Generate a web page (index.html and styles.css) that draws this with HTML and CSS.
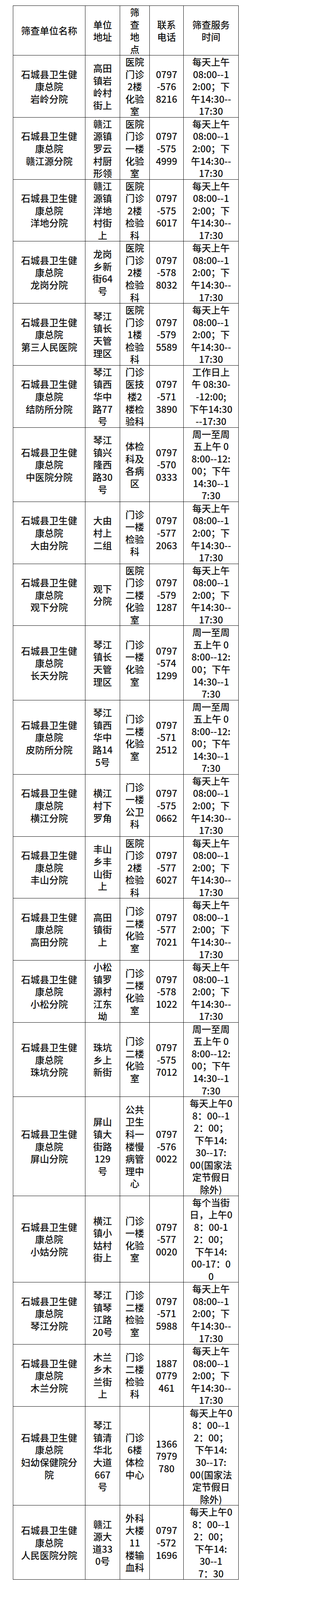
FILE: index.html
```html
<!DOCTYPE html>
<html lang="zh-CN">
<head>
<meta charset="utf-8">
<title>筛查单位</title>
<link rel="stylesheet" href="styles.css">
</head>
<body>
<div class="page">
<table class="screening">
<colgroup>
<col class="c-name"><col class="c-addr"><col class="c-place"><col class="c-tel"><col class="c-time">
</colgroup>
<thead>
<tr><th>筛查单位名称</th><th>单位<br>地址</th><th>筛<br>查<br>地<br>点</th><th>联系<br>电话</th><th>筛查服务<br>时间</th></tr>
</thead>
<tbody>
<tr><td>石城县卫生健<br>康总院<br>岩岭分院</td><td>高田<br>镇岩<br>岭村<br>街上</td><td>医院<br>门诊<br>2楼<br>化验<br>室</td><td>0797<br>-576<br>8216</td><td>每天上午<br>08:00--1<br>2:00；下<br>午14:30--<br>17:30</td></tr>
<tr><td>石城县卫生健<br>康总院<br>赣江源分院</td><td>赣江<br>源镇<br>罗云<br>村厨<br>形领</td><td>医院<br>门诊<br>一楼<br>化验<br>室</td><td>0797<br>-575<br>4999</td><td>每天上午<br>08:00--1<br>2:00；下<br>午14:30--<br>17:30</td></tr>
<tr><td>石城县卫生健<br>康总院<br>洋地分院</td><td>赣江<br>源镇<br>洋地<br>村街<br>上</td><td>医院<br>门诊<br>2楼<br>检验<br>科</td><td>0797<br>-575<br>6017</td><td>每天上午<br>08:00--1<br>2:00；下<br>午14:30--<br>17:30</td></tr>
<tr><td>石城县卫生健<br>康总院<br>龙岗分院</td><td>龙岗<br>乡新<br>街64<br>号</td><td>医院<br>门诊<br>2楼<br>检验<br>科</td><td>0797<br>-578<br>8032</td><td>每天上午<br>08:00--1<br>2:00；下<br>午14:30--<br>17:30</td></tr>
<tr><td>石城县卫生健<br>康总院<br>第三人民医院</td><td>琴江<br>镇长<br>天管<br>理区</td><td>医院<br>门诊<br>1楼<br>检验<br>科</td><td>0797<br>-579<br>5589</td><td>每天上午<br>08:00--1<br>2:00；下<br>午14:30--<br>17:30</td></tr>
<tr><td>石城县卫生健<br>康总院<br>结防所分院</td><td>琴江<br>镇西<br>华中<br>路77<br>号</td><td>门诊<br>医技<br>楼2<br>楼检<br>验科</td><td>0797<br>-571<br>3890</td><td>工作日上<br>午 08:30-<br>-12:00;<br>下午14:30<br>--17:30</td></tr>
<tr><td>石城县卫生健<br>康总院<br>中医院分院</td><td>琴江<br>镇兴<br>隆西<br>路30<br>号</td><td>体检<br>科及<br>各病<br>区</td><td>0797<br>-570<br>0333</td><td>周一至周<br>五上午 0<br>8:00--12:<br>00；下午<br>14:30--1<br>7:30</td></tr>
<tr><td>石城县卫生健<br>康总院<br>大由分院</td><td>大由<br>村上<br>二组</td><td>门诊<br>一楼<br>检验<br>科</td><td>0797<br>-577<br>2063</td><td>每天上午<br>08:00--1<br>2:00；下<br>午14:30--<br>17:30</td></tr>
<tr><td>石城县卫生健<br>康总院<br>观下分院</td><td>观下<br>分院</td><td>医院<br>门诊<br>二楼<br>化验<br>室</td><td>0797<br>-579<br>1287</td><td>每天上午<br>08:00--1<br>2:00；下<br>午14:30--<br>17:30</td></tr>
<tr><td>石城县卫生健<br>康总院<br>长天分院</td><td>琴江<br>镇长<br>天管<br>理区</td><td>门诊<br>一楼<br>化验<br>室</td><td>0797<br>-574<br>1299</td><td>周一至周<br>五上午 0<br>8:00--12:<br>00；下午<br>14:30--1<br>7:30</td></tr>
<tr><td>石城县卫生健<br>康总院<br>皮防所分院</td><td>琴江<br>镇西<br>华中<br>路14<br>5号</td><td>门诊<br>二楼<br>化验<br>室</td><td>0797<br>-571<br>2512</td><td>周一至周<br>五上午 0<br>8:00--12:<br>00；下午<br>14:30--1<br>7:30</td></tr>
<tr><td>石城县卫生健<br>康总院<br>横江分院</td><td>横江<br>村下<br>罗角</td><td>门诊<br>一楼<br>公卫<br>科</td><td>0797<br>-575<br>0662</td><td>每天上午<br>08:00--1<br>2:00；下<br>午14:30--<br>17:30</td></tr>
<tr><td>石城县卫生健<br>康总院<br>丰山分院</td><td>丰山<br>乡丰<br>山街<br>上</td><td>医院<br>门诊<br>2楼<br>检验<br>科</td><td>0797<br>-577<br>6027</td><td>每天上午<br>08:00--1<br>2:00；下<br>午14:30--<br>17:30</td></tr>
<tr><td>石城县卫生健<br>康总院<br>高田分院</td><td>高田<br>镇街<br>上</td><td>门诊<br>二楼<br>化验<br>室</td><td>0797<br>-577<br>7021</td><td>每天上午<br>08:00--1<br>2:00；下<br>午14:30--<br>17:30</td></tr>
<tr><td>石城县卫生健<br>康总院<br>小松分院</td><td>小松<br>镇罗<br>源村<br>江东<br>坳</td><td>门诊<br>二楼<br>化验<br>室</td><td>0797<br>-578<br>1022</td><td>每天上午<br>08:00--1<br>2:00；下<br>午14:30--<br>17:30</td></tr>
<tr><td>石城县卫生健<br>康总院<br>珠坑分院</td><td>珠坑<br>乡上<br>新街</td><td>门诊<br>二楼<br>化验<br>室</td><td>0797<br>-575<br>7012</td><td>周一至周<br>五上午 0<br>8:00--12:<br>00；下午<br>14:30--1<br>7:30</td></tr>
<tr><td>石城县卫生健<br>康总院<br>屏山分院</td><td>屏山<br>镇大<br>街路<br>129<br>号</td><td>公共<br>卫生<br>科一<br>楼慢<br>病管<br>理中<br>心</td><td>0797<br>-576<br>0022</td><td>每天上午0<br>8：00--1<br>2：00；<br>下午14:<br>30--17:<br>00(国家法<br>定节假日<br>除外)</td></tr>
<tr><td>石城县卫生健<br>康总院<br>小姑分院</td><td>横江<br>镇小<br>姑村<br>街上</td><td>门诊<br>一楼<br>化验<br>室</td><td>0797<br>-577<br>0020</td><td>每个当街<br>日，上午0<br>8：00-1<br>2：00；<br>下午14:<br>00-17：0<br>0</td></tr>
<tr><td>石城县卫生健<br>康总院<br>琴江分院</td><td>琴江<br>镇琴<br>江路<br>20号</td><td>门诊<br>二楼<br>检验<br>室</td><td>0797<br>-571<br>5988</td><td>每天上午<br>08:00--1<br>2:00；下<br>午14:30--<br>17:30</td></tr>
<tr><td>石城县卫生健<br>康总院<br>木兰分院</td><td>木兰<br>乡木<br>兰街<br>上</td><td>门诊<br>二楼<br>检验<br>科</td><td>1887<br>0779<br>461</td><td>每天上午<br>08:00--1<br>2:00；下<br>午14:30--<br>17:30</td></tr>
<tr><td>石城县卫生健<br>康总院<br>妇幼保健院分<br>院</td><td>琴江<br>镇清<br>华北<br>大道<br>667<br>号</td><td>门诊<br>6楼<br>体检<br>中心</td><td>1366<br>7979<br>780</td><td>每天上午0<br>8：00--1<br>2：00；<br>下午14:<br>30--17:<br>00(国家法<br>定节假日<br>除外)</td></tr>
<tr><td>石城县卫生健<br>康总院<br>人民医院分院</td><td>赣江<br>源大<br>道33<br>0号</td><td>外科<br>大楼<br>11<br>楼输<br>血科</td><td>0797<br>-572<br>1696</td><td>每天上午0<br>8：00--1<br>2：00；<br>下午14:<br>30--1<br>7：30</td></tr>
</tbody>
</table>
</div>
</body>
</html>
```
FILE: styles.css
```css
html, body {
  margin: 0;
  padding: 0;
  background: #ffffff;
}

.page {
  padding: 14px 0 24px 33px;
}

.screening {
  border-collapse: collapse;
  table-layout: fixed;
  width: 578px;
  font-family: "Noto Sans CJK SC", "Noto Sans", sans-serif;
  font-size: 24px;
  line-height: 31.55px;
  color: #111111;
}

.c-name { width: 185px; }
.c-addr { width: 89px; }
.c-place { width: 76px; }
.c-tel { width: 87px; }
.c-time { width: 141px; }

.screening th,
.screening td {
  border: 1.6px solid #111111;
  padding: 0;
  text-align: center;
  vertical-align: middle;
  white-space: nowrap;
  font-weight: 500;
}
```
